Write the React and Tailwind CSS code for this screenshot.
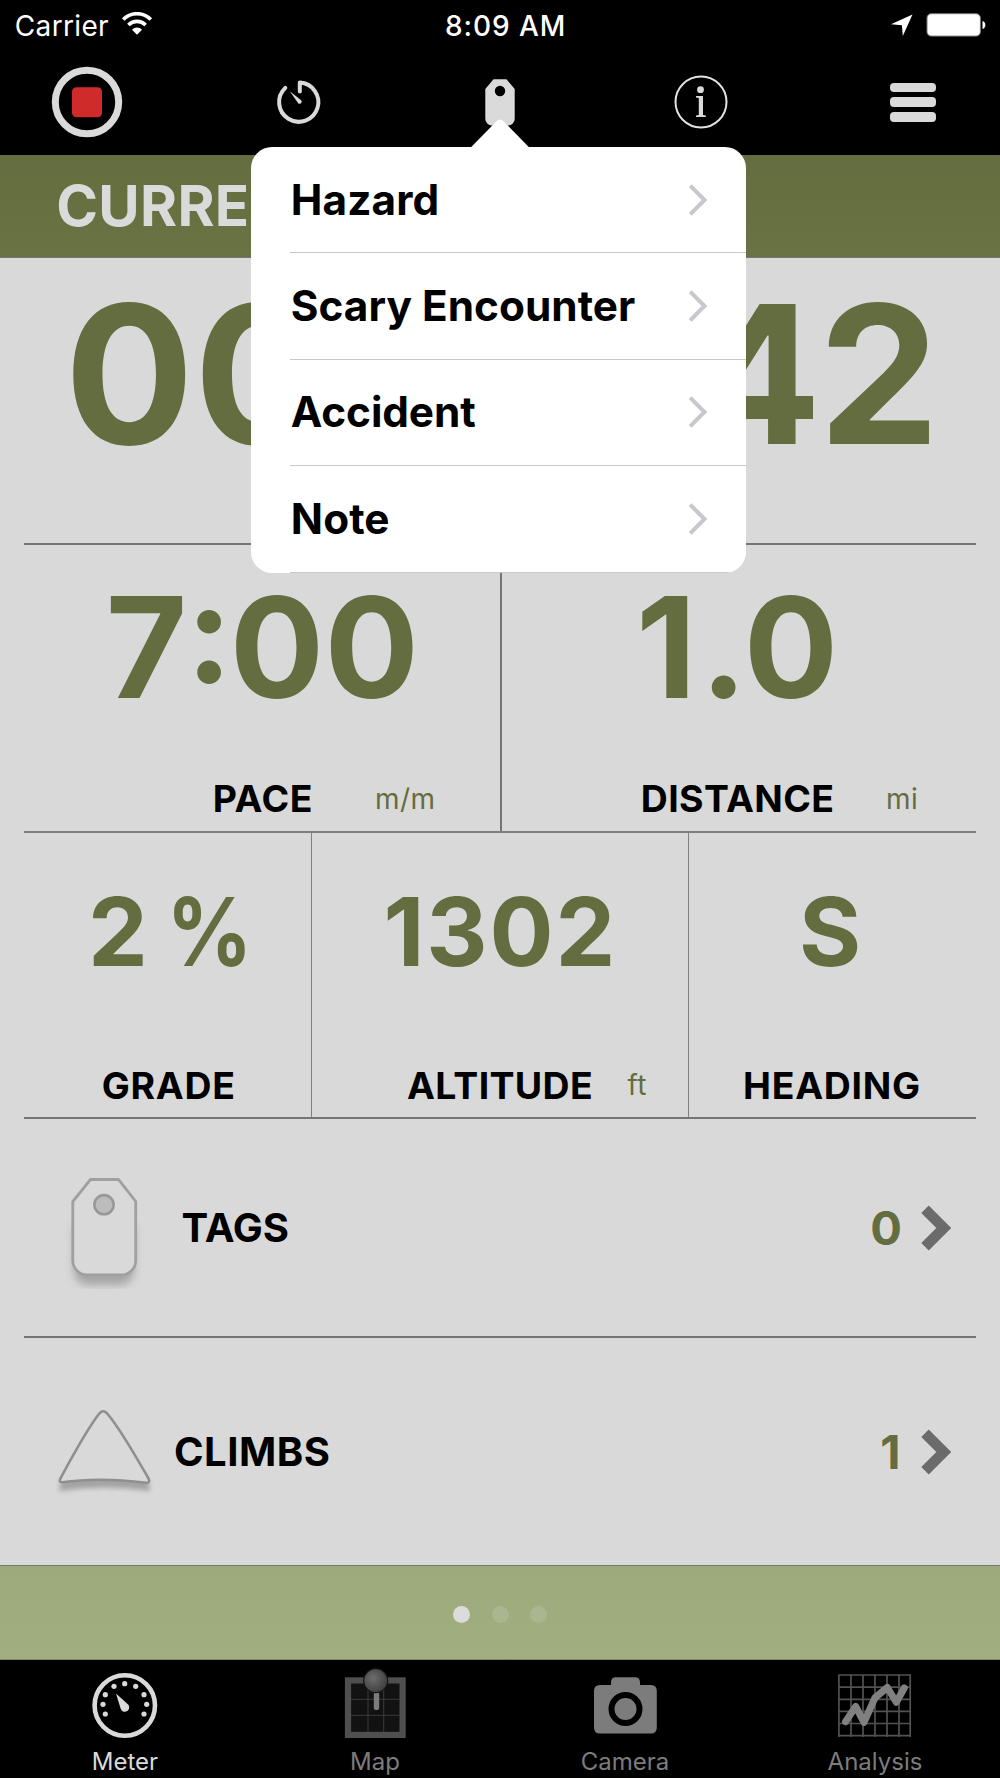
import React from "react";

const OLIVE = "text-[#646d3f]";

function StatusBar() {
  return (
    <div className="flex h-[51px] items-start text-[28px] leading-[28px] text-white">
      <span className="w-[106px] ml-[14.8px] mt-[11.5px] shrink-0 tracking-[0.34px]">Carrier</span>
      <svg className="mt-[12px] h-[24px] w-[32px] shrink-0" viewBox="0 0 32 24" fill="none" stroke="#fff">
        <path d="M2.2 7.6C10-0.3 22-0.3 29.8 7.6" strokeWidth="3.6" />
        <path d="M7.4 13C12.4 8.2 19.6 8.2 24.6 13" strokeWidth="3.6" />
        <path d="M11 17.7C14 14.9 18 14.9 21 17.7L16 22.7Z" fill="#fff" stroke="none" />
      </svg>
      <span className="ml-[292.2px] mt-[11.5px] w-[140px] shrink-0 font-medium tracking-[0.95px]">8:09 AM</span>
      <svg className="ml-[305.5px] mt-[13px] h-[24px] w-[24px] shrink-0" viewBox="0 0 24 24" fill="#fff">
        <path d="M22.5 1.5L1 11.3L11.9 12.2L12.8 23Z" />
      </svg>
      <svg className="ml-[12px] mt-[12px] h-[26px] w-[62px] shrink-0" viewBox="0 0 62 26">
        <rect x="1" y="1.7" width="53.4" height="22.4" rx="4.2" fill="#fff" stroke="#777" strokeWidth="1" />
        <path d="M56.5 9C60.3 9.5 60.3 16.5 56.5 17Z" fill="#fff" />
      </svg>
    </div>
  );
}

function NavBar() {
  return (
    <div className="flex h-[103.5px] items-start">
      <svg className="ml-[47px] mt-[10.5px] h-[80px] w-[80px]" viewBox="0 0 80 80">
        <circle cx="40" cy="40" r="31.7" fill="none" stroke="#dadada" strokeWidth="7" />
        <rect x="25" y="25.2" width="30" height="30" rx="4.5" fill="#d02b2b" />
      </svg>
      <svg className="ml-[142px] mt-[20.5px] h-[60px] w-[60px]" viewBox="0 0 60 60" fill="none" stroke="#dadada" strokeWidth="4" strokeLinecap="round" strokeLinejoin="round">
        <path d="M30.8 19.5V10.6A19.6 19.6 0 1 1 16.3 15.9" />
        <path d="M20.8 19.3L32.2 28.2A2 2 0 0 1 29 31Z" fill="#dadada" stroke="none" />
      </svg>
      <svg className="ml-[141px] mt-[20.5px] h-[60px] w-[60px]" viewBox="0 0 60 60">
        <path fillRule="evenodd" fill="#dadada" d="M23.5 7.3H36.5L44.7 17V47A6.5 6.5 0 0 1 38.2 53.5H21.8A6.5 6.5 0 0 1 15.3 47V17ZM30 13.8A5.2 5.2 0 1 0 30 24.2A5.2 5.2 0 1 0 30 13.8Z" />
      </svg>
      <svg className="ml-[140.5px] mt-[20.5px] h-[60px] w-[60px]" viewBox="0 0 60 60">
        <circle cx="30" cy="30" r="25.5" fill="none" stroke="#e2e2e2" strokeWidth="2" />
        <circle cx="29.5" cy="17.7" r="3.4" fill="#dadada" />
        <path d="M25 24H32V43L34.8 43.5V44.9H25V43.5L27.8 43V26L25 25.4Z" fill="#dadada" />
      </svg>
      <div className="ml-[159.5px] mt-[31.5px] flex w-[46px] flex-col gap-[5px]">
        <i className="block h-[9.7px] rounded-[4px] bg-[#dadada]" />
        <i className="block h-[9.7px] rounded-[4px] bg-[#dadada]" />
        <i className="block h-[9.7px] rounded-[4px] bg-[#dadada]" />
      </div>
    </div>
  );
}

function Metric({ cell, value, valueClass, label, labelClass, unit }) {
  return (
    <div className={`shrink-0 font-bold ${cell}`}>
      <div className={`whitespace-nowrap ${OLIVE} ${valueClass}`}>{value}</div>
      <div className="flex h-[38px] items-start">
        <span className={`shrink-0 whitespace-nowrap text-[37.4px] leading-[38px] ${labelClass}`}>{label}</span>
        {unit && <span className={`mt-[4.5px] text-[28px] font-normal leading-[28px] tracking-[0.4px] ${OLIVE}`}>{unit}</span>}
      </div>
    </div>
  );
}

function Chevron() {
  return (
    <svg className="h-[48px] w-[34px] shrink-0" viewBox="0 0 34 48" fill="none" stroke="#6b6b6b" strokeWidth="10.5">
      <path d="M5 5.2L23.8 24L5 42.8" />
    </svg>
  );
}

function TagIcon() {
  return (
    <svg className="mt-[10px] h-[116px] w-[80px] shrink-0" viewBox="0 0 80 116">
      <defs>
        <filter id="tagBlur" x="-30%" y="-30%" width="160%" height="160%"><feGaussianBlur stdDeviation="4" /></filter>
        <clipPath id="tagClip"><rect width="80" height="114" /></clipPath>
      </defs>
      <g clipPath="url(#tagClip)">
        <path d="M10 50H70V95A14 14 0 0 1 56 110H24A14 14 0 0 1 10 95Z" fill="#8f8f8f" opacity="0.7" filter="url(#tagBlur)" />
      </g>
      <path d="M26.5 4.5H54.5L71.7 26.5V86A14.5 14.5 0 0 1 57 100H23A14.5 14.5 0 0 1 8.8 86V26.5Z" fill="#d9d9d9" stroke="#a0a0a0" strokeWidth="2.8" />
      <circle cx="40" cy="29.7" r="9.6" fill="#bcbcbc" stroke="#989898" strokeWidth="2.6" />
    </svg>
  );
}

function ClimbIcon() {
  return (
    <svg className="mb-[2px] h-[100px] w-[100px] shrink-0" viewBox="0 0 100 100">
      <defs>
        <filter id="climbBlur" x="-20%" y="-50%" width="140%" height="200%"><feGaussianBlur stdDeviation="2.8" /></filter>
      </defs>
      <path d="M6 79Q49 72 93 79L95 90Q49 83 4 90Z" fill="#858585" opacity="0.65" filter="url(#climbBlur)" />
      <path d="M43.5 13.5Q48 7 53 13.5C66 29 80 54 93.5 77.5Q95.5 82 91 81.7C65 78.5 33 77.5 7 81.3Q3.5 81.5 5.5 77.3C18 54 31 30 43.5 13.5Z" fill="#d9d9d9" stroke="#8f8f8f" strokeWidth="2.6" />
    </svg>
  );
}

function Popover() {
  const items = ["Hazard", "Scary Encounter", "Accident", "Note"];
  const tracking = ["tracking-[0.11px]", "tracking-[0.04px]", "tracking-[-0.1px]", "tracking-[0.1px]"];
  return (
    <div className="absolute left-[251px] top-[147px] w-[495.3px]">
      <svg className="absolute left-[220px] top-[-29px] h-[30px] w-[60px]" viewBox="0 0 60 30">
        <path d="M0 29.3L25.5 3.2Q29 0 32.5 3.2L58 29.3V30H0Z" fill="#fff" />
      </svg>
      <div className="overflow-hidden rounded-[21px] bg-white">
        {items.map((t, i) => (
          <div key={t} className="ml-[39px] flex h-[106.4px] items-center justify-between border-b border-[#c9c9cc] pl-[0.8px] pr-[38px]">
            <span className={`whitespace-nowrap text-[42.3px] font-bold leading-[42px] text-black ${tracking[i]}`}>{t}</span>
            <svg className="h-[34px] w-[20px]" viewBox="0 0 20 34" fill="none" stroke="#c7c7cc" strokeWidth="4">
              <path d="M2.2 2.7L16.5 17L2.2 31.3" />
            </svg>
          </div>
        ))}
      </div>
    </div>
  );
}

const METER_DOTS = [[39.7, 18.7], [29, 21.3], [50.7, 21.3], [20.3, 29.7], [59, 29.7], [18, 39.3], [61.7, 39.3], [20.3, 49], [59, 49]];

const ICONS = {
  Meter: (
    <>
      <circle cx="39.8" cy="40.5" r="30.2" fill="none" stroke="#dadada" strokeWidth="4.6" />
      {METER_DOTS.map(([x, y]) => <circle key={`${x}-${y}`} cx={x} cy={y} r="2.6" fill="#dadada" />)}
      <path d="M31 28.5L43.4 39.8A4.4 4.4 0 1 1 35.6 43.6Z" fill="#dadada" />
    </>
  ),
  Map: (
    <>
      <defs>
        <radialGradient id="pin" cx="0.4" cy="0.4" r="0.65"><stop offset="0" stopColor="#6d6d6d" /><stop offset="1" stopColor="#3c3c3c" /></radialGradient>
      </defs>
      <rect x="13" y="15.4" width="54.6" height="54.5" fill="#121212" stroke="#4f4f4f" strokeWidth="6.2" />
      <path d="M33 18.5V67M48.7 18.5V67M16 34.3H64.5M16 50.3H64.5" stroke="#3b3b3b" strokeWidth="1" />
      <rect x="38.8" y="27" width="5.4" height="18" rx="2" fill="#7c7c7c" />
      <circle cx="40.7" cy="15.7" r="12" fill="url(#pin)" stroke="#151515" strokeWidth="1.2" />
    </>
  ),
  Camera: (
    <>
      <path d="M31 12.3H50Q55 12.3 55 17.5V20H66Q71.8 20 71.8 26V62.5Q71.8 68.6 66 68.6H15Q9 68.6 9 62.5V26Q9 20 15 20H26V17.5Q26 12.3 31 12.3Z" fill="#7c7c7c" />
      <circle cx="40.5" cy="44" r="14" fill="none" stroke="#000" strokeWidth="6" />
    </>
  ),
  Analysis: (
    <>
      <path d="M3.9 9.3V72M16 9.3V72M28 9.3V72M40 9.3V72M52 9.3V72M64 9.3V72M75.2 9.3V72M3.3 10H75.7M3.3 22.2H75.7M3.3 34.4H75.7M3.3 46.4H75.7M3.3 58.5H75.7M3.3 70.7H75.7" stroke="#525252" strokeWidth="1.7" />
      <path d="M10.5 56.7L20.7 41.5L29 57.3L40 32.8L52.3 22.5L61.3 37.3L69.3 23" fill="none" stroke="#808080" strokeWidth="7" strokeLinecap="round" strokeLinejoin="round" />
    </>
  ),
};

function TabBar() {
  return (
    <div className="grid h-[118px] grid-cols-4 bg-black">
      {Object.keys(ICONS).map((name, i) => (
        <div key={name} className={`flex flex-col items-center pt-[5px] text-[24px] leading-[24px] ${i === 0 ? "text-[#dadada]" : "text-[#7c7c7c]"}`}>
          <svg className="h-[80px] w-[80px]" viewBox="0 0 80 80">{ICONS[name]}</svg>
          <span className="mt-[5.5px]">{name}</span>
        </div>
      ))}
    </div>
  );
}

export default function App() {
  return (
    <div className="relative h-[1778px] w-[1000px] overflow-hidden bg-[#d9d9d9] font-['Inter',sans-serif] text-black">
      <div className="h-[154.5px] bg-black">
        <StatusBar />
        <NavBar />
      </div>
      <div className="h-[103px] border-b-[1.5px] border-[#77777a] bg-linear-to-b from-[#646d3f] to-[#697343] pl-[56.3px] pt-[22px]">
        <div className="whitespace-nowrap text-[56.5px] font-bold leading-[57px] tracking-[0.28px] text-[#dadada]">CURRE</div>
      </div>

      <div className="px-[24px]">
        <div className={`flex h-[287.5px] justify-between border-b-2 border-[#757575] pl-[40.5px] pr-[39.5px] pt-[20.5px] text-[192px] font-bold leading-[192px] ${OLIVE}`}>
          <span>00</span>
          <span className="tracking-[-3px]">42</span>
        </div>

        <div className="flex h-[287.5px] border-b-[2.5px] border-[#808080]">
          <Metric cell="w-[477.5px] border-r-2 border-[#757575] pt-[32px]" value={<>7<span className="relative left-[3px] top-[-15px]">:</span>00</>} valueClass="mb-[63px] pl-[81.7px] text-[140px] leading-[140px] tracking-[0.3px]" label="PACE" labelClass="w-[351px] pl-[188.8px] tracking-[0.6px]" unit="m/m" />
          <Metric cell="w-[474.5px] pt-[32px]" value={<>1<span className="relative left-[1.5px]">.</span>0</>} valueClass="mb-[63px] pl-[134.5px] text-[140px] leading-[140px] tracking-[2.3px]" label="DISTANCE" labelClass="w-[384.5px] pl-[139.3px] tracking-[0.4px]" unit="mi" />
        </div>

        <div className="flex h-[286.5px] border-b-2 border-[#757575]">
          <Metric cell="w-[288px] border-r border-[#808080] pt-[51px]" value={<>2 <span className="inline-block origin-right scale-x-[0.89]">%</span></>} valueClass="mb-[88px] pl-[64px] text-[95px] leading-[95px] [word-spacing:-14.5px]" label="GRADE" labelClass="pl-[77.8px] tracking-[0.7px]" />
          <Metric cell="w-[376.5px] border-r border-[#808080] pt-[51px]" value="1302" valueClass="mb-[88px] pl-[71.5px] text-[95px] leading-[95px] tracking-[1.9px]" label="ALTITUDE" labelClass="w-[315.5px] pl-[95px] tracking-[0.35px]" unit="ft" />
          <Metric cell="w-[285px] pt-[51px]" value="S" valueClass="mb-[88px] pl-[110.5px] text-[95px] leading-[95px]" label="HEADING" labelClass="pl-[54.5px] tracking-[0.75px]" />
        </div>

        <div className="flex h-[219px] items-center border-b-2 border-[#757575] pl-[39.5px] pr-[22.5px]">
          <TagIcon />
          <span className="ml-[38px] grow text-[40px] font-bold leading-[40px]">TAGS</span>
          <span className={`mr-[17.5px] text-[47px] font-bold leading-[47px] ${OLIVE}`}>0</span>
          <Chevron />
        </div>

        <div className="flex h-[227px] items-center pl-[31px] pr-[22.5px]">
          <ClimbIcon />
          <span className="ml-[19px] grow text-[40px] font-bold leading-[40px] tracking-[0.5px]">CLIMBS</span>
          <span className={`mr-[19px] text-[47px] font-bold leading-[47px] ${OLIVE}`}>1</span>
          <Chevron />
        </div>
      </div>

      <div className="flex h-[94.5px] items-center justify-center gap-[21.7px] border-y-[1.5px] border-t-[#77777a] border-b-[#7f8a61] bg-linear-to-b from-[#9daa7b] to-[#a1ae80] pt-[4.5px]">
        <i className="h-[17px] w-[17px] rounded-full bg-[#dcdcdc]" />
        <i className="h-[17px] w-[17px] rounded-full bg-[#abb590]" />
        <i className="h-[17px] w-[17px] rounded-full bg-[#abb590]" />
      </div>
      <TabBar />
      <Popover />
    </div>
  );
}
